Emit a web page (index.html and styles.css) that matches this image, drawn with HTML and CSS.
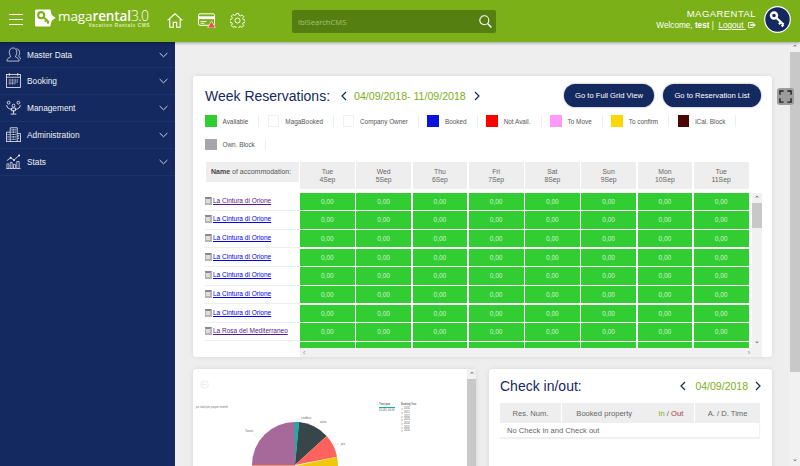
FILE: index.html
```html
<!DOCTYPE html>
<html lang="en">
<head>
<meta charset="utf-8">
<title>Magarental CMS</title>
<link rel="stylesheet" href="styles.css">
</head>
<body>
<div class="app">
  <header class="topbar">
    <div class="burger"><span></span><span></span><span></span></div>
    <div class="logo">
      <svg class="logo-mark" viewBox="0 0 22 18"><path d="M1.5 0H16l1.5 5.5L21.5 9l-4 3L16 18H1.5A1.5 1.5 0 0 1 0 16.500V1.500A1.500 1.500 0 0 1 1.500 0Z" fill="#fff"/><circle cx="6.500" cy="6" r="3.200" fill="none" stroke="#7cb018" stroke-width="2.200"/><path d="M9 8.200l5.500 5.300M12 11l-1.500 1.800M14.300 13.200l-1.500 1.600" fill="none" stroke="#7cb018" stroke-width="2"/></svg>
      <div class="logo-text">
        <div class="logo-name">maga<b>rental</b><i>3.0</i></div>
        <div class="logo-sub">Vacation Rentals CMS</div>
      </div>
    </div>
    <nav class="top-icons">
      <svg class="ti-home" viewBox="0 0 16 15"><path d="M.6 7.400L8 .8l7.400 6.600M2.800 6v8.300h3.500V9.400h3.400v4.900h3.500V6" fill="none" stroke="#fff" stroke-width="1.100"/></svg>
      <svg class="ti-card" viewBox="0 0 18 15"><rect x=".5" y=".8" width="16" height="11.500" rx="1.500" fill="none" stroke="#fff"/><rect x=".5" y="3.300" width="16" height="2.800" fill="#fff"/><path d="M2.500 8.500h6M2.500 10.300h4" stroke="#fff" stroke-width=".8"/><path d="M13.500 8l4 7h-8Z" fill="#e9503f" stroke="#fff" stroke-width=".6"/></svg>
      <svg class="ti-gear" viewBox="0 0 16 16"><path d="M6.700.6h2.600l.4 2 1.300.6 1.800-1.100 1.800 1.800-1.100 1.800.6 1.300 2 .4v2.600l-2 .4-.6 1.300 1.100 1.800-1.800 1.800-1.800-1.100-1.300.6-.4 2H6.700l-.4-2-1.300-.6-1.800 1.100-1.800-1.800 1.100-1.800-.6-1.300-2-.4V6.800l2-.4.6-1.300-1.100-1.800 1.800-1.800L5 2.600l1.300-.6Z" fill="none" stroke="#fff" stroke-width="1"/><circle cx="8" cy="8" r="2.700" fill="none" stroke="#fff"/></svg>
    </nav>
    <div class="search">
      <span class="search-label">lblSearchCMS</span>
      <svg class="search-icon" viewBox="0 0 13 13"><circle cx="5.300" cy="5.300" r="4.500" fill="none" stroke="#fff" stroke-width="1.100"/><path d="M8.600 8.600L12.400 12.400" stroke="#fff" stroke-width="1.400"/></svg>
    </div>
    <div class="user">
      <div class="user-name">MAGARENTAL</div>
      <div class="user-line">Welcome, <b>test</b> | &nbsp;<u>Logout&nbsp;</u>
        <svg class="logout" viewBox="0 0 9 7"><path d="M5.500 1.500V.5H.5v6h5v-1" fill="none" stroke="#fff"/><path d="M2.500 2.500H6V1l3 2.500L6 6V4.500H2.500Z" fill="#fff"/></svg>
      </div>
    </div>
    <svg class="avatar" viewBox="0 0 27 27"><circle cx="13.500" cy="13.500" r="12.800" fill="#14295f" stroke="#fff" stroke-width="1.200"/><circle cx="10" cy="9.500" r="3" fill="none" stroke="#fff" stroke-width="2.400"/><path d="M12.500 12l7 6.500M17 16l-2 2.200M19.500 18.500l-1.800 2" fill="none" stroke="#fff" stroke-width="2.300"/></svg>
  </header>

  <div class="body">
    <aside class="sidebar">
      <a class="menu-item">
        <svg class="menu-icon" viewBox="0 0 16 16"><path d="M1 15c0-3 2-3.500 4-4.500 0-1-1.500-2-1.500-5C3.500 3 5 1 7.500 1s4 2 4 4.500c0 3-1.500 4-1.500 5 2 1 4 1.500 4 4.500ZM11 2c2 0 3.500 1.500 3.500 4 0 2-1 3-1 4 1 .5 2 1 2 3" fill="none" stroke="#fff" stroke-width=".7"/></svg>
        <span class="menu-label">Master Data</span>
        <svg class="chev" viewBox="0 0 9 6"><path d="M.6 1l3.900 3.800L8.400 1" fill="none" stroke="#fff" stroke-width=".8"/></svg>
      </a>
      <a class="menu-item">
        <svg class="menu-icon" viewBox="0 0 16 16"><rect x=".5" y="1.500" width="15" height="14" fill="none" stroke="#fff" stroke-width=".8"/><path d="M.5 4.500h15M3.500 0v3M12.500 0v3" stroke="#fff" stroke-width=".8"/><path d="M3 7.500h10M3 9.500h10M3 11.500h7" stroke="#fff" stroke-width="1.100" stroke-dasharray="1 .7"/></svg>
        <span class="menu-label">Booking</span>
        <svg class="chev" viewBox="0 0 9 6"><path d="M.6 1l3.900 3.800L8.400 1" fill="none" stroke="#fff" stroke-width=".8"/></svg>
      </a>
      <a class="menu-item">
        <svg class="menu-icon" viewBox="0 0 16 16"><circle cx="2.800" cy="2.800" r="1.500" fill="none" stroke="#fff" stroke-width=".8"/><circle cx="13.200" cy="2.800" r="1.500" fill="none" stroke="#fff" stroke-width=".8"/><circle cx="8" cy="6" r="1.500" fill="none" stroke="#fff" stroke-width=".8"/><path d="M.8 5.500c0 3 2.500 4 5 4.500M15.200 5.500c0 3-2.500 4-5 4.500M6 8.500h4v3H6ZM8 11.500v3M5 15h6" fill="none" stroke="#fff" stroke-width=".9"/></svg>
        <span class="menu-label">Management</span>
        <svg class="chev" viewBox="0 0 9 6"><path d="M.6 1l3.900 3.800L8.400 1" fill="none" stroke="#fff" stroke-width=".8"/></svg>
      </a>
      <a class="menu-item">
        <svg class="menu-icon" viewBox="0 0 16 16"><path d="M4.500 15.500V.8h7.500v14.700M.5 15.500V5.500h4M12 7h3.500v8.500M0 15.500h16" fill="none" stroke="#fff" stroke-width=".8"/><path d="M6 3h5M6 5.500h5M6 8h5M6 10.500h5M6 13h5M1.700 8h2M1.700 10.500h2M1.700 13h2M13 9.500h1.500M13 12h1.500" stroke="#fff" stroke-width="1.200" stroke-dasharray="1 .6"/></svg>
        <span class="menu-label">Administration</span>
        <svg class="chev" viewBox="0 0 9 6"><path d="M.6 1l3.900 3.800L8.400 1" fill="none" stroke="#fff" stroke-width=".8"/></svg>
      </a>
      <a class="menu-item">
        <svg class="menu-icon" viewBox="0 0 16 16"><path d="M1 15.500v-5h2v5ZM4.500 15.500v-6.500h2v6.500ZM8 15.500v-4.500h2v4.500ZM11.500 15.500v-7.500h2.500v7.500ZM0 15.800h16" fill="none" stroke="#fff" stroke-width=".7"/><path d="M1 7l4-3 3.500 2.500L14 1.500" fill="none" stroke="#fff" stroke-width=".8"/><circle cx="5" cy="4" r="1" fill="#fff"/><circle cx="8.500" cy="6.500" r="1" fill="#fff"/><circle cx="14" cy="1.500" r="1" fill="#fff"/></svg>
        <span class="menu-label">Stats</span>
        <svg class="chev" viewBox="0 0 9 6"><path d="M.6 1l3.900 3.800L8.400 1" fill="none" stroke="#fff" stroke-width=".8"/></svg>
      </a>
    </aside>

    <main class="main">
      <div class="content">
        <section class="card week">
          <div class="week-head">
            <h1 class="title">Week Reservations:</h1>
            <svg class="arrow first" viewBox="0 0 6 10"><path d="M5 1L1 5l4 4" fill="none" stroke="#14295f" stroke-width="1.200"/></svg>
            <span class="date">04/09/2018- 11/09/2018</span>
            <svg class="arrow" viewBox="0 0 6 10"><path d="M1 1l4 4-4 4" fill="none" stroke="#14295f" stroke-width="1.200"/></svg>
            <div class="actions">
              <a class="btn btn-grid">Go to Full Grid View</a>
              <a class="btn btn-list">Go to Reservation List</a>
            </div>
          </div>
          <ul class="legend">
            <li><i class="sw c-avail"></i>Available</li>
            <li><i class="sw c-white"></i>MagaBooked</li>
            <li><i class="sw c-white"></i>Company Owner</li>
            <li><i class="sw c-booked"></i>Booked</li>
            <li><i class="sw c-red"></i>Not Avail.</li>
            <li><i class="sw c-pink"></i>To Move</li>
            <li><i class="sw c-yellow"></i>To confirm</li>
            <li><i class="sw c-dark"></i>iCal. Block</li>
            <li><i class="sw c-gray"></i>Own. Block</li>
          </ul>
          <div class="grid-head">
            <div class="name-head"><b>Name</b> of accommodation:</div>
            <div class="day">Tue<br>4Sep</div>
            <div class="day">Wed<br>5Sep</div>
            <div class="day">Thu<br>6Sep</div>
            <div class="day">Fri<br>7Sep</div>
            <div class="day">Sat<br>8Sep</div>
            <div class="day">Sun<br>9Sep</div>
            <div class="day">Mon<br>10Sep</div>
            <div class="day">Tue<br>11Sep</div>
          </div>
          <div class="grid-body">
            <div class="rows">
              <div class="row">
                <div class="prop"><i class="prop-icon"></i><a class="visited">La Cintura di Orione</a></div>
                <div class="cell">0,00</div><div class="cell">0,00</div><div class="cell">0,00</div><div class="cell">0,00</div><div class="cell">0,00</div><div class="cell">0,00</div><div class="cell">0,00</div><div class="cell">0,00</div>
              </div>
              <div class="row">
                <div class="prop"><i class="prop-icon"></i><a>La Cintura di Orione</a></div>
                <div class="cell">0,00</div><div class="cell">0,00</div><div class="cell">0,00</div><div class="cell">0,00</div><div class="cell">0,00</div><div class="cell">0,00</div><div class="cell">0,00</div><div class="cell">0,00</div>
              </div>
              <div class="row">
                <div class="prop"><i class="prop-icon"></i><a>La Cintura di Orione</a></div>
                <div class="cell">0,00</div><div class="cell">0,00</div><div class="cell">0,00</div><div class="cell">0,00</div><div class="cell">0,00</div><div class="cell">0,00</div><div class="cell">0,00</div><div class="cell">0,00</div>
              </div>
              <div class="row">
                <div class="prop"><i class="prop-icon"></i><a>La Cintura di Orione</a></div>
                <div class="cell">0,00</div><div class="cell">0,00</div><div class="cell">0,00</div><div class="cell">0,00</div><div class="cell">0,00</div><div class="cell">0,00</div><div class="cell">0,00</div><div class="cell">0,00</div>
              </div>
              <div class="row">
                <div class="prop"><i class="prop-icon"></i><a>La Cintura di Orione</a></div>
                <div class="cell">0,00</div><div class="cell">0,00</div><div class="cell">0,00</div><div class="cell">0,00</div><div class="cell">0,00</div><div class="cell">0,00</div><div class="cell">0,00</div><div class="cell">0,00</div>
              </div>
              <div class="row">
                <div class="prop"><i class="prop-icon"></i><a>La Cintura di Orione</a></div>
                <div class="cell">0,00</div><div class="cell">0,00</div><div class="cell">0,00</div><div class="cell">0,00</div><div class="cell">0,00</div><div class="cell">0,00</div><div class="cell">0,00</div><div class="cell">0,00</div>
              </div>
              <div class="row">
                <div class="prop"><i class="prop-icon"></i><a>La Cintura di Orione</a></div>
                <div class="cell">0,00</div><div class="cell">0,00</div><div class="cell">0,00</div><div class="cell">0,00</div><div class="cell">0,00</div><div class="cell">0,00</div><div class="cell">0,00</div><div class="cell">0,00</div>
              </div>
              <div class="row">
                <div class="prop"><i class="prop-icon"></i><a class="visited">La Rosa del Mediterraneo</a></div>
                <div class="cell">0,00</div><div class="cell">0,00</div><div class="cell">0,00</div><div class="cell">0,00</div><div class="cell">0,00</div><div class="cell">0,00</div><div class="cell">0,00</div><div class="cell">0,00</div>
              </div>
              <div class="row">
                <div class="prop prop-empty"></div>
                <div class="cell"></div><div class="cell"></div><div class="cell"></div><div class="cell"></div><div class="cell"></div><div class="cell"></div><div class="cell"></div><div class="cell"></div>
              </div>
            </div>
            <div class="vbar">
              <span class="sb-btn">&#8963;</span>
              <span class="sb-thumb"></span>
              <span class="sb-down">&#8964;</span>
            </div>
          </div>
          <div class="hbar"><span>&#8249;</span><span>&#8250;</span></div>
        </section>

        <div class="lower">
          <section class="card report">
            <div class="report-area">
              <svg class="report-back" viewBox="0 0 10 10"><circle cx="5" cy="5" r="4.300" fill="none" stroke="#ddd" stroke-width=".6"/><path d="M5 2.500L2.500 5 5 7.500M2.500 5h5" fill="none" stroke="#ddd" stroke-width=".6"/></svg>
              <div class="report-top">
                <div class="report-caption">ps total per payee month</div>
                <div class="slicers">
                  <div class="slicer">
                    <div class="slicer-title">Timespan</div>
                    <div class="slicer-line"></div>
                    <div class="slicer-range">01-08 | 04-09</div>
                  </div>
                  <ul class="years">
                    <li class="years-title">Booking Year</li>
                    <li>2010</li><li>2011</li><li>2012</li><li>2013</li><li>2014</li><li>2015</li><li>2016</li>
                  </ul>
                </div>
              </div>
              <svg class="pie" viewBox="0 0 140 46">
                <path d="M70 45V2L74 2Z" fill="#01b8aa"/>
                <path d="M74 2A43 43 0 0 1 101.700 16L70 45Z" fill="#374649"/>
                <path d="M101.700 16A43 43 0 0 1 112 36.700L70 45Z" fill="#fd625e"/>
                <path d="M112 36.700A43 43 0 0 1 113 46H70Z" fill="#f2c80f"/>
                <path d="M70 45V2A43 43 0 0 0 27 45Z" fill="#a66999"/>
                <path d="M27 45h43v1H27Z" fill="#fe9666"/>
                <path d="M72 2V-1l3-1M87 6l4-3M108 25l6-1M32 17l-4-4" fill="none" stroke="#ccc" stroke-width=".4"/>
                <text x="76" y="-1" class="pie-label">cordless</text>
                <text x="95" y="3" class="pie-label">extra</text>
                <text x="116" y="25" class="pie-label">pro</text>
                <text x="20" y="12" class="pie-label">Tourist</text>
              </svg>
            </div>
            <div class="report-scroll"><span class="sb-btn">&#8963;</span><span class="report-thumb"></span></div>
          </section>

          <section class="card checks">
            <div class="check-head">
              <h2 class="title">Check in/out:</h2>
              <svg class="arrow push" viewBox="0 0 6 10"><path d="M5 1L1 5l4 4" fill="none" stroke="#14295f" stroke-width="1.200"/></svg>
              <span class="date date-small">04/09/2018</span>
              <svg class="arrow arrow-end" viewBox="0 0 6 10"><path d="M1 1l4 4-4 4" fill="none" stroke="#14295f" stroke-width="1.200"/></svg>
            </div>
            <div class="check-table">
              <div class="check-cols">
                <div class="th">Res. Num.</div>
                <div class="th">Booked property</div>
                <div class="th"><span class="in">In</span> / <span class="out">Out</span></div>
                <div class="th">A. / D. Time</div>
              </div>
              <div class="check-empty">No Check in and Check out</div>
            </div>
          </section>
        </div>
      </div>
      <div class="page-scroll">
        <span class="sb-btn">&#8963;</span>
        <span class="page-thumb"></span>
        <span class="sb-down">&#8964;</span>
      </div>
      <button class="fullscreen" aria-label="Fullscreen">
        <svg viewBox="0 0 14 14"><path d="M1 5V1h4M9 1h4v4M13 9v4H9M5 13H1V9" fill="none" stroke="#222" stroke-width="1.500"/></svg>
      </button>
    </main>
  </div>
</div>
</body>
</html>
```
FILE: styles.css
```css
* { box-sizing: border-box; }
html, body { margin: 0; padding: 0; height: 100%; overflow: hidden; }
body { font-family: "Liberation Sans", Arial, sans-serif; color: #666; background: #eee; }
.app { width: 800px; height: 466px; display: flex; flex-direction: column; overflow: hidden; }

/* top bar */
.topbar { height: 42px; flex: none; background: #7cb018; display: flex; align-items: center; color: #fff; position: relative; z-index: 2; box-shadow: 0 1px 3px rgba(0,0,0,.35); }
.burger { width: 14px; margin-left: 9px; display: flex; flex-direction: column; gap: 4.400px; margin-top: -3px; }
.burger span { height: 1px; background: #fff; }
.logo { display: flex; margin-left: 12px; margin-top: -5px; width: 118px; gap: 2px; }
.logo-mark { width: 21px; height: 18px; flex: none; }
.logo-text { width: 95px; }
.logo-name { font-family: "Open Sans", "Liberation Sans", sans-serif; font-size: 13.500px; line-height: 14px; white-space: nowrap; letter-spacing: -.1px; }
.logo-name b { font-weight: 600; }
.logo-name i { font-style: normal; font-weight: 300; font-size: 14px; letter-spacing: -.7px; }
.logo-sub { font-size: 4.800px; font-weight: 700; line-height: 5px; letter-spacing: .55px; text-align: right; color: #dcebbd; margin-right: 3px; margin-top: .5px; white-space: nowrap; }
.top-icons { display: flex; align-items: center; margin-left: 14px; margin-top: -2px; }
.ti-home { width: 16px; height: 15px; }
.ti-card { width: 18px; height: 15px; margin-left: 15px; }
.ti-gear { width: 15px; height: 15px; margin-left: 14px; }
.search { width: 204px; height: 23px; margin-left: 47px; margin-top: 1px; background: #557f10; border-radius: 2px; display: flex; align-items: center; padding: 0 4px 0 6px; }
.search-label { font-family: "Open Sans", sans-serif; font-size: 7.600px; color: #a6c47c; flex: 1; }
.search-icon { width: 13px; height: 13px; }
.user { margin-left: auto; text-align: right; font-size: 8.200px; line-height: 12px; margin-top: -3px; }
.user-name { font-size: 9.500px; letter-spacing: .45px; line-height: 13px; }
.logout { width: 8px; height: 6px; }
.avatar { width: 27px; height: 27px; margin: -4px 9px 0 8px; flex: none; }

/* layout */
.body { flex: 1; display: flex; min-height: 0; }
.sidebar { width: 175px; flex: none; background: #14295f; padding-top: 0; }
.menu-item { height: 26.900px; display: flex; align-items: center; padding: 0 6px; border-bottom: 1px solid #1c3369; color: #f0f0f0; font-size: 8.300px; }
.menu-item:first-child { height: 26px; }
.menu-icon { width: 15px; height: 15px; flex: none; margin-right: 6px; }
.menu-label { flex: 1; }
.chev { width: 9px; height: 6px; margin-right: 1px; }

.main { flex: 1; display: flex; min-width: 0; position: relative; }
.content { flex: 1; padding: 34px 18px 0; min-width: 0; }
.card { background: #fff; border-radius: 3px; box-shadow: 0 0 5px rgba(0,0,0,.1); }

/* week card */
.week { height: 281px; padding: 8px 0 0 12px; position: relative; }
.week-head { display: flex; align-items: center; height: 23px; padding-right: 11px; }
.title { margin: 0; font-weight: 400; font-size: 14px; color: #14295f; white-space: nowrap; }
.arrow { width: 6px; height: 10px; flex: none; }
.arrow.first { margin-left: 11px; }
.date { color: #7cb018; font-size: 10.600px; margin: 0 8px 0 7px; white-space: nowrap; }
.actions { margin-left: auto; display: flex; gap: 9px; }
.btn { height: 23px; border-radius: 12px; background: #14295f; color: #fff; font-size: 7.600px; display: flex; align-items: center; justify-content: center; box-shadow: 0 0 2px rgba(0,0,0,.5); }
.btn-grid { width: 90px; }
.btn-list { width: 98px; }

.legend { list-style: none; margin: 8px 0 0; padding: 0; display: flex; flex-wrap: wrap; width: 560px; height: 47px; }
.legend li { height: 12px; margin: 0 8.500px 11px 0; padding-right: 10px; border-right: 1px solid #eee; display: flex; align-items: center; font-size: 6.400px; color: #555; white-space: nowrap; }
.sw { width: 11.500px; height: 11.500px; margin-right: 6px; flex: none; }
.c-avail { background: #32cd32; }
.c-white { background: #fff; border: 1px solid #f0f0f0; }
.c-booked { background: #0a14dc; }
.c-red { background: #ff0000; }
.c-pink { background: #ff99ff; }
.c-yellow { background: #ffd700; }
.c-dark { background: #4b0505; }
.c-gray { background: #a9a5ad; }

.grid-head { display: grid; grid-template-columns: 93.500px repeat(8, 1fr); column-gap: 1.500px; width: 543.500px; height: 27px; align-items: start; font-size: 6.800px; }
.name-head { height: 20px; margin-left: 1px; background: #eee; padding-left: 5px; white-space: pre; font-size: 7px; color: #555; line-height: 20px; }
.name-head b { color: #444; }
.day { height: 27px; background: #eee; text-align: center; padding-top: 6px; line-height: 7.700px; color: #666; }
.grid-body { display: flex; margin-top: 3.700px; height: 155.300px; overflow: hidden; }
.rows { width: 547px; padding-right: 3.500px; flex: none; }
.row { display: grid; grid-template-columns: 93.500px repeat(8, 1fr); column-gap: 1.500px; height: 18.670px; }
.prop { height: 18.200px; border-bottom: 1px solid #eee; display: flex; align-items: center; font-size: 6.500px; padding-bottom: 2px; white-space: nowrap; margin-right: -1.500px; }
.prop-empty { border-bottom: 0; }
.prop a { color: #0000ee; text-decoration: underline; }
.prop a.visited { color: #551a8b; }
.prop-icon { width: 8px; height: 8px; margin: 1px 1px 0 -1px; flex: none; border: 2px solid #b5b5b5; border-top-color: #888; background: #ddd; }
.cell { height: 17.300px; background: #32cd32; color: #d8efd8; font-size: 6.500px; text-align: center; line-height: 17px; }

.vbar { width: 10px; background: #f1f1f1; display: flex; flex-direction: column; align-items: stretch; flex: none; position: relative; }
.sb-btn { height: 10px; flex: none; background: #f1f1f1; font-size: 7px; line-height: 12px; text-align: center; color: #444; display: block; }
.sb-thumb { height: 25px; background: #c8c8c8; display: block; }
.sb-down { margin-top: auto; height: 10px; font-size: 7px; line-height: 6px; text-align: center; color: #444; display: block; }
.hbar { margin-left: 95px; width: 462px; height: 9px; background: #f1f1f1; display: flex; justify-content: space-between; padding: 0 12px 0 3px; font-size: 7px; line-height: 9px; color: #888; }

/* lower cards */
.lower { display: flex; gap: 13px; margin-top: 12px; }
.lower .card { height: 120px; width: 283px; flex: none; }
.report { display: flex; overflow: hidden; }
.report-area { flex: 1; min-width: 0; padding: 0 3px; position: relative; }
.report-back { width: 9px; height: 9px; display: block; margin: 11px 0 0 4px; }
.report-top { display: flex; height: 18px; margin-top: 15px; }
.report-caption { font-size: 2.900px; color: #777; margin-top: 1px; width: 183px; white-space: nowrap; }
.slicers { display: flex; gap: 6px; margin-top: -1px; font-size: 2.600px; color: #555; height: 18px; }
.slicer { width: 16px; }
.slicer-title, .years-title { color: #333; line-height: 3px; white-space: nowrap; }
.slicer-line { height: 1px; background: #01b8aa; margin: 1px 0; }
.slicer-range { white-space: nowrap; line-height: 3px; }
.years { list-style: none; margin: 0; padding: 0; line-height: 4px; }
.years li { display: flex; align-items: center; gap: 1px; height: 3.700px; white-space: nowrap; }
.years li::before { content: ""; width: 2px; height: 2px; background: #ddd; flex: none; }
.years .years-title { line-height: 4px; height: 4.500px; }
.years .years-title::before { display: none; }
.pie { width: 140px; height: 46px; display: block; margin: -2px 0 0 29px; overflow: visible; }
.pie-label { font-size: 2.800px; fill: #666; font-family: "Liberation Sans", sans-serif; }
.report-scroll { width: 9px; flex: none; background: #f1f1f1; }
.report-thumb { display: block; height: 100px; background: #c8c8c8; }

.checks { padding: 6px 12px 0 11px; }
.check-head { display: flex; align-items: center; height: 21px; }
.push { margin-left: auto; }
.date-small { margin: 0 7px 0 9px; font-size: 10.500px; }
.arrow-end { margin-right: -1px; }
.check-table { margin-top: 7px; font-size: 7.600px; color: #666; width: 260px; }
.check-cols { display: grid; grid-template-columns: 61px 85px 47px 65px; column-gap: .7px; }
.th { height: 20px; background: #eee; display: flex; align-items: center; justify-content: center; white-space: pre; }
.in { color: #7cb018; }
.out { color: #a33a3a; }
.check-empty { height: 15px; padding-left: 7px; line-height: 15px; border: 1px solid #f0f0f0; border-top: 0; border-left: 0; box-shadow: 0 1px 1px rgba(0,0,0,.06); }

/* page scrollbar */
.page-scroll { width: 10px; flex: none; background: #f1f1f1; display: flex; flex-direction: column; height: 424px; }
.page-thumb { display: block; height: 320px; background: #c8c8c8; }
.fullscreen { position: absolute; top: 46px; right: 6px; width: 17px; height: 17px; padding: 2px; border: 0; border-radius: 3px; background: #9c9c9c; display: flex; }
.fullscreen svg { width: 13px; height: 13px; }
```
